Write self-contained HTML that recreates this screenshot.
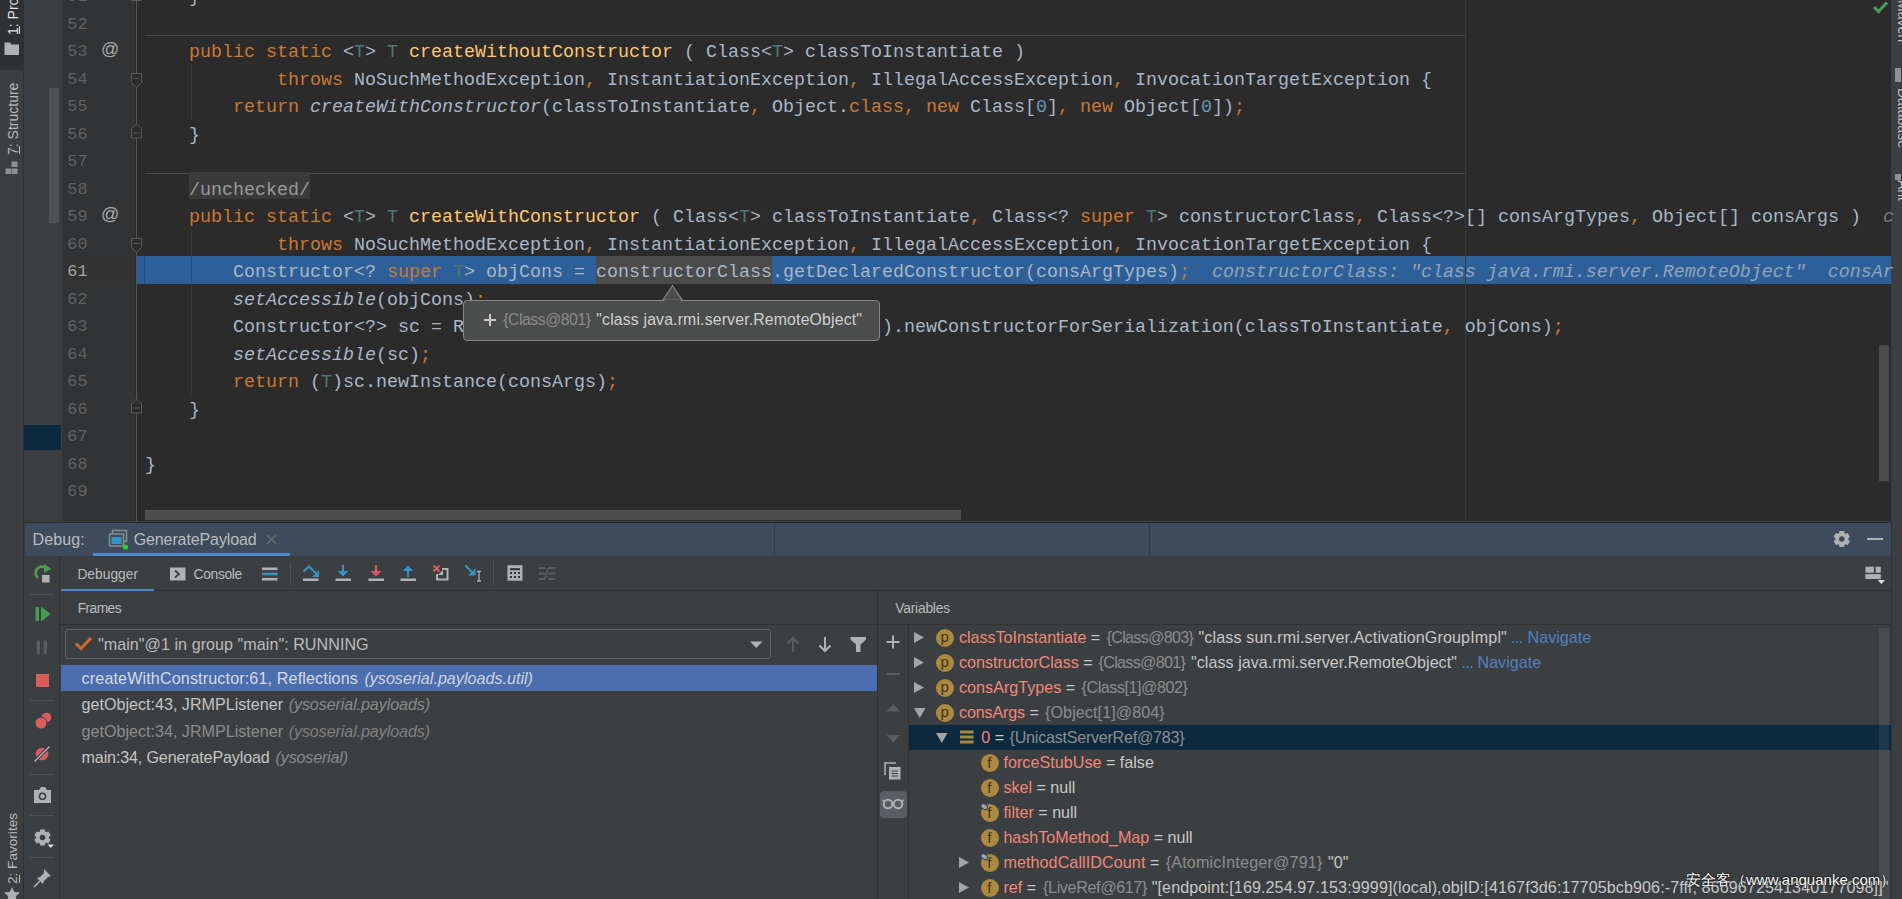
<!DOCTYPE html><html><head><meta charset="utf-8"><style>
*{margin:0;padding:0;box-sizing:border-box}
html,body{width:1902px;height:899px;overflow:hidden;background:#2b2b2b}
body{position:relative;font-family:"Liberation Sans",sans-serif}
.a{position:absolute}
.ln{position:absolute;left:57.5px;width:30px;text-align:right;font-family:"Liberation Mono",monospace;font-size:16.8px;color:#606366;height:27.5px;line-height:27.5px}
.code{position:absolute;left:145px;white-space:pre;font-family:"Liberation Mono",monospace;font-size:18.333px;line-height:27.5px;height:27.5px;color:#a9b7c6}
.k{color:#cc7832}
.m{color:#ffc66d}
.t{color:#507874}
.n{color:#6897bb}
.i{font-style:italic}
.dv{font-style:italic;color:#787878}
.ui{font-family:"Liberation Sans",sans-serif;white-space:pre;position:absolute}
</style></head><body>
<div class="a" style="left:0;top:0;width:23px;height:899px;background:#3c3f41"></div>
<div class="a" style="left:0;top:0;width:23px;height:70px;background:#2e3032"></div>
<div class="a" style="left:23px;top:0;width:1px;height:899px;background:#2f3133"></div>
<div class="a" style="left:24px;top:0;width:38px;height:521px;background:#3c3f41"></div>
<div class="a" style="left:49px;top:88px;width:10px;height:135px;background:#4f5254"></div>
<div class="a" style="left:24px;top:425px;width:37px;height:25px;background:#0d293e"></div>
<div class="a" style="left:62px;top:0;width:73px;height:521px;background:#313335"></div>
<div class="a" style="left:135px;top:0;width:1756px;height:521px;background:#2b2b2b"></div>
<div class="a" style="left:1891px;top:0;width:11px;height:899px;background:#3c3f41"></div>
<div class="a" style="left:137px;top:256.0px;width:1754px;height:27.5px;background:#2d6099"></div>
<div class="a" style="left:62px;top:256.0px;width:73px;height:27.5px;background:#323232"></div>
<div class="a" style="left:145px;top:35px;width:1320px;height:1px;background:#4b4b4b"></div>
<div class="a" style="left:145px;top:173px;width:1320px;height:1px;background:#4b4b4b"></div>
<div class="a" style="left:1465px;top:0;width:1px;height:521px;background:#3b3b3b"></div>
<div class="a" style="left:191px;top:63.5px;width:1px;height:55.0px;background:#393939"></div>
<div class="a" style="left:191px;top:228.5px;width:1px;height:165.0px;background:#393939"></div>
<div class="a" style="left:191px;top:256.0px;width:1px;height:27.5px;background:#1f4d80"></div>
<div class="a" style="left:144px;top:256.0px;width:1px;height:27.5px;background:#1f4d80"></div>
<div class="a" style="left:136px;top:0;width:1px;height:521px;background:#555"></div>
<div class="ln" style="top:-17.0px;color:#606366">51</div>
<div class="ln" style="top:10.5px;color:#606366">52</div>
<div class="ln" style="top:38.0px;color:#606366">53</div>
<div class="ln" style="top:65.5px;color:#606366">54</div>
<div class="ln" style="top:93.0px;color:#606366">55</div>
<div class="ln" style="top:120.5px;color:#606366">56</div>
<div class="ln" style="top:148.0px;color:#606366">57</div>
<div class="ln" style="top:175.5px;color:#606366">58</div>
<div class="ln" style="top:203.0px;color:#606366">59</div>
<div class="ln" style="top:230.5px;color:#606366">60</div>
<div class="ln" style="top:258.0px;color:#a4a3a3">61</div>
<div class="ln" style="top:285.5px;color:#606366">62</div>
<div class="ln" style="top:313.0px;color:#606366">63</div>
<div class="ln" style="top:340.5px;color:#606366">64</div>
<div class="ln" style="top:368.0px;color:#606366">65</div>
<div class="ln" style="top:395.5px;color:#606366">66</div>
<div class="ln" style="top:423.0px;color:#606366">67</div>
<div class="ln" style="top:450.5px;color:#606366">68</div>
<div class="ln" style="top:478.0px;color:#606366">69</div>
<div class="a" style="left:101px;top:36.0px;height:27.5px;line-height:27.5px;font-size:18px;color:#a9a9a9;font-family:Liberation Sans">@</div>
<div class="a" style="left:101px;top:201.0px;height:27.5px;line-height:27.5px;font-size:18px;color:#a9a9a9;font-family:Liberation Sans">@</div>
<svg class="a" style="left:0;top:0" width="200" height="521"><polygon points="131.5,0.5 141.5,0.5 141.5,-8.5 136.5,-13.5 131.5,-8.5" fill="#2b2b2b" stroke="#5c5c5c" stroke-width="1"/><line x1="133.5" y1="-4.5" x2="139.5" y2="-4.5" stroke="#5c5c5c"/><polygon points="131.5,73.5 141.5,73.5 141.5,82.5 136.5,87.5 131.5,82.5" fill="#2b2b2b" stroke="#5c5c5c" stroke-width="1"/><line x1="133.5" y1="78.5" x2="139.5" y2="78.5" stroke="#5c5c5c"/><polygon points="131.5,138.0 141.5,138.0 141.5,129.0 136.5,124.0 131.5,129.0" fill="#2b2b2b" stroke="#5c5c5c" stroke-width="1"/><line x1="133.5" y1="133.0" x2="139.5" y2="133.0" stroke="#5c5c5c"/><polygon points="131.5,238.5 141.5,238.5 141.5,247.5 136.5,252.5 131.5,247.5" fill="#2b2b2b" stroke="#5c5c5c" stroke-width="1"/><line x1="133.5" y1="243.5" x2="139.5" y2="243.5" stroke="#5c5c5c"/><polygon points="131.5,413.0 141.5,413.0 141.5,404.0 136.5,399.0 131.5,404.0" fill="#2b2b2b" stroke="#5c5c5c" stroke-width="1"/><line x1="133.5" y1="408.0" x2="139.5" y2="408.0" stroke="#5c5c5c"/></svg>
<div class="a" style="left:189px;top:172.0px;width:121px;height:26.5px;background:#3a3a3a"></div>
<div class="a" style="left:596.0px;top:256.0px;width:176.0px;height:27.5px;background:#4b4b4b"></div>
<div class="code" style="top:-16.0px">    }</div>
<div class="code" style="top:39.0px"><span class="k">    public static </span>&lt;<span class="t">T</span>&gt; <span class="t">T </span><span class="m">createWithoutConstructor</span> ( Class&lt;<span class="t">T</span>&gt; classToInstantiate )</div>
<div class="code" style="top:66.5px"><span class="k">            throws </span>NoSuchMethodException<span class="k">, </span>InstantiationException<span class="k">, </span>IllegalAccessException<span class="k">, </span>InvocationTargetException {</div>
<div class="code" style="top:94.0px"><span class="k">        return </span><span class="i">createWithConstructor</span>(classToInstantiate<span class="k">, </span>Object.<span class="k">class</span><span class="k">, </span><span class="k">new </span>Class[<span class="n">0</span>]<span class="k">, </span><span class="k">new </span>Object[<span class="n">0</span>])<span class="k">;</span></div>
<div class="code" style="top:121.5px">    }</div>
<div class="code" style="top:204.0px"><span class="k">    public static </span>&lt;<span class="t">T</span>&gt; <span class="t">T </span><span class="m">createWithConstructor</span> ( Class&lt;<span class="t">T</span>&gt; classToInstantiate<span class="k">, </span>Class&lt;? <span class="k">super </span><span class="t">T</span>&gt; constructorClass<span class="k">, </span>Class&lt;?&gt;[] consArgTypes<span class="k">, </span>Object[] consArgs )  <span class="dv">c</span></div>
<div class="code" style="top:231.5px"><span class="k">            throws </span>NoSuchMethodException<span class="k">, </span>InstantiationException<span class="k">, </span>IllegalAccessException<span class="k">, </span>InvocationTargetException {</div>
<div class="code" style="top:259.0px">        Constructor&lt;? <span class="k">super </span><span class="t">T</span>&gt; objCons = constructorClass.getDeclaredConstructor(consArgTypes)<span class="k">;</span><span style="font-style:italic;color:#92a5b9">  constructorClass: &quot;class java.rmi.server.RemoteObject&quot;  consAr</span></div>
<div class="code" style="top:286.5px"><span class="i">        setAccessible</span>(objCons)<span class="k">;</span></div>
<div class="code" style="top:314.0px">        Constructor&lt;?&gt; sc = ReflectionFactory.getReflectionFactory().newConstructorForSerialization(classToInstantiate<span class="k">, </span>objCons)<span class="k">;</span></div>
<div class="code" style="top:341.5px"><span class="i">        setAccessible</span>(sc)<span class="k">;</span></div>
<div class="code" style="top:369.0px"><span class="k">        return </span>(<span class="t">T</span>)sc.newInstance(consArgs)<span class="k">;</span></div>
<div class="code" style="top:396.5px">    }</div>
<div class="code" style="top:451.5px">}</div>
<div class="code" style="top:176.5px">    <span style="color:#999">/unchecked/</span></div>
<div class="a" style="left:145px;top:510px;width:816px;height:10px;background:#4e4e4e"></div>
<div class="a" style="left:1879px;top:345px;width:10px;height:136px;background:#4c4c4c"></div>
<svg class="a" style="left:1872px;top:0" width="18" height="16"><path d="M2,7 L6.5,11.5 L15,2.5" stroke="#499c54" stroke-width="3" fill="none"/></svg>
<div class="a" style="left:463px;top:299.5px;width:417px;height:41px;background:#4b4d4d;border:1px solid #858585;border-radius:4px"></div>
<svg class="a" style="left:660px;top:284px" width="26" height="17"><polygon points="3,16 12.5,1.5 22,16" fill="#4b4d4d" stroke="#858585" stroke-width="1.2"/><rect x="4.5" y="15.6" width="16" height="2.5" fill="#4b4d4d"/></svg>
<svg class="a" style="left:483px;top:313px" width="14" height="14"><path d="M7,1 V13 M1,7 H13" stroke="#c8c8c8" stroke-width="2"/></svg>
<div class="a" style="left:24px;top:521px;width:1867px;height:378px;background:#3c3f41"></div>
<div class="a" style="left:25px;top:522px;width:1866px;height:1px;background:#2b2b2b"></div>
<div class="a" style="left:25px;top:523px;width:1866px;height:33px;background:#3d4b5c"></div>
<div class="a" style="left:774px;top:523px;width:1px;height:33px;background:#323a44"></div>
<div class="a" style="left:1149px;top:523px;width:1px;height:33px;background:#323a44"></div>
<div class="a" style="left:93px;top:553px;width:197px;height:3px;background:#4a88c7"></div>
<div class="ui" style="left:32.5px;top:531.22px;font-size:16px;line-height:17.87px;color:#bbbbbb;font-family:'Liberation Sans';letter-spacing:0.143px;">Debug:</div>
<div class="ui" style="left:133.7px;top:531.22px;font-size:16px;line-height:17.87px;color:#bbbbbb;font-family:'Liberation Sans';letter-spacing:-0.108px;">GeneratePayload</div>
<svg class="a" style="left:265px;top:533px" width="13" height="13"><path d="M2,2 L11,11 M11,2 L2,11" stroke="#6e6e6e" stroke-width="1.3"/></svg>
<svg class="a" style="left:108px;top:529px" width="22" height="22"><rect x="4.5" y="1.5" width="14" height="11" fill="none" stroke="#8a8e91" stroke-width="1.5"/><rect x="1.5" y="5" width="14" height="12" fill="#3d4b5c" stroke="#8a8e91" stroke-width="1.5"/><rect x="3.5" y="8" width="10" height="7" fill="#3592c4"/><circle cx="17.5" cy="18" r="2.6" fill="#2bd12b"/></svg>
<svg class="a" style="left:1833px;top:530px" width="18" height="18"><path fill="#afb1b3" fill-rule="evenodd" d="M11.63,14.74 L10.97,17.11 L6.63,17.11 L5.97,14.74 L5.24,14.32 L2.86,14.94 L0.69,11.17 L2.41,9.42 L2.41,8.58 L0.69,6.83 L2.86,3.06 L5.24,3.68 L5.97,3.26 L6.63,0.89 L10.97,0.89 L11.63,3.26 L12.36,3.68 L14.74,3.06 L16.91,6.83 L15.19,8.58 L15.19,9.42 L16.91,11.17 L14.74,14.94 L12.36,14.32 Z M11.60,9.00 A2.8,2.8 0 1 0 6.00,9.00 A2.8,2.8 0 1 0 11.60,9.00 Z"/></svg>
<div class="a" style="left:1867px;top:538px;width:16px;height:2px;background:#afb1b3"></div>
<div class="a" style="left:59px;top:556px;width:1px;height:343px;background:#323232"></div>
<div class="a" style="left:60px;top:590px;width:1831px;height:1px;background:#323232"></div>
<div class="a" style="left:61px;top:589px;width:93px;height:2px;background:#4a88c7"></div>
<div class="ui" style="left:77.4px;top:566.51px;font-size:13.8px;line-height:15.41px;color:#bbbbbb;font-family:'Liberation Sans';letter-spacing:0.001px;">Debugger</div>
<div class="ui" style="left:193.5px;top:566.51px;font-size:13.8px;line-height:15.41px;color:#bbbbbb;font-family:'Liberation Sans';letter-spacing:-0.304px;">Console</div>
<svg class="a" style="left:170px;top:567px" width="16" height="14"><rect x="0" y="0.5" width="15.5" height="13" fill="#afb1b3"/><path d="M5,3.5 L9,7 L5,10.5" stroke="#3c3f41" stroke-width="1.8" fill="none"/></svg>
<svg class="a" style="left:262px;top:567px" width="16" height="14"><rect x="0" y="0.5" width="15.5" height="2.6" fill="#afb1b3"/><rect x="0" y="5.7" width="15.5" height="2.6" fill="#3592c4"/><rect x="0" y="10.9" width="15.5" height="2.6" fill="#afb1b3"/></svg>
<div class="a" style="left:290px;top:562px;width:1px;height:23px;background:#505254"></div>
<div class="a" style="left:493px;top:561px;width:1px;height:24px;background:#505254"></div>
<svg class="a" style="left:302px;top:564px" width="18" height="18"><path d="M1.5,7.5 L7,2.5 L12,7.5" stroke="#3592c4" stroke-width="2" fill="none"/><path d="M12,7.5 L15.5,11" stroke="#3592c4" stroke-width="2"/><polygon points="17,6 17,13 10,13" fill="#3592c4"/><rect x="1" y="14.5" width="15.5" height="2.5" fill="#afb1b3"/></svg>
<svg class="a" style="left:335px;top:564px" width="18" height="18"><rect x="7" y="1" width="2" height="8" fill="#3592c4"/><polygon points="2.5,7 13.5,7 8,12.5" fill="#3592c4"/><rect x="0.5" y="14.5" width="15.5" height="2.5" fill="#afb1b3"/></svg>
<svg class="a" style="left:368px;top:564px" width="18" height="18"><rect x="7" y="1" width="2" height="8" fill="#db5c5c"/><polygon points="2.5,7 13.5,7 8,12.5" fill="#db5c5c"/><rect x="0.5" y="14.5" width="15.5" height="2.5" fill="#afb1b3"/></svg>
<svg class="a" style="left:400px;top:564px" width="18" height="18"><rect x="7" y="5" width="2" height="8" fill="#3592c4"/><polygon points="2.5,7 13.5,7 8,1.5" fill="#3592c4"/><rect x="0.5" y="14.5" width="15.5" height="2.5" fill="#afb1b3"/></svg>
<svg class="a" style="left:432px;top:564px" width="18" height="18"><path d="M1.5,1.5 L7.5,7.5 M7.5,1.5 L1.5,7.5" stroke="#db5c5c" stroke-width="2"/><path d="M10,5 H15.5 V15.5 H5 V10" stroke="#afb1b3" stroke-width="2" fill="none"/><polygon points="6,11 11,11 11,6" fill="#afb1b3"/></svg>
<svg class="a" style="left:464px;top:564px" width="20" height="20"><path d="M1.5,1.5 L9,9" stroke="#3592c4" stroke-width="2.2"/><polygon points="11.5,4 11.5,11.5 4,11.5" fill="#3592c4"/><path d="M13,7.5 H17 M15,7.5 V17 M13,17 H17" stroke="#afb1b3" stroke-width="1.3"/></svg>
<svg class="a" style="left:507px;top:565px" width="16" height="16"><rect x="0.5" y="0.2" width="15" height="15.5" fill="#afb1b3"/><g fill="#2f3133"><rect x="3" y="3.2" width="10" height="2"/><rect x="3" y="7" width="2" height="2"/><rect x="7" y="7" width="2" height="2"/><rect x="11" y="7" width="2" height="2"/><rect x="3" y="11" width="2" height="2"/><rect x="7" y="11" width="2" height="2"/><rect x="11" y="11" width="2" height="2"/></g></svg>
<svg class="a" style="left:539px;top:566px" width="17" height="15"><g stroke="#5b5d5f" stroke-width="2" fill="none"><path d="M0,2 H6.5 M0,7.5 H6 M0,13 H6 M9,2 H16.5 M9,7.5 H16.5 M9,13 H16.5"/><path d="M6,13 L9,2" stroke-width="1.3"/></g></svg>
<svg class="a" style="left:1865px;top:566px" width="22" height="20"><rect x="0.4" y="0.7" width="8.5" height="6" fill="#afb1b3"/><rect x="10.6" y="0.7" width="5.2" height="6" fill="#afb1b3"/><rect x="0.4" y="8.1" width="15.4" height="4.9" fill="#afb1b3"/><polygon points="12.7,14 20,14 16.35,18" fill="#dddddd"/></svg>
<svg class="a" style="left:33px;top:564px" width="20" height="20"><path d="M5,14 A6,6 0 1 1 13,4" stroke="#499c54" stroke-width="2.6" fill="none"/><polygon points="11,0 18,4.5 11,9" fill="#499c54"/><rect x="9" y="11" width="7.5" height="7.5" fill="#afb1b3"/></svg>
<div class="a" style="left:30px;top:594px;width:24px;height:1px;background:#505254"></div>
<div class="a" style="left:30px;top:700px;width:24px;height:1px;background:#505254"></div>
<div class="a" style="left:30px;top:774px;width:24px;height:1px;background:#505254"></div>
<div class="a" style="left:30px;top:815px;width:24px;height:1px;background:#505254"></div>
<div class="a" style="left:30px;top:857px;width:24px;height:1px;background:#505254"></div>
<svg class="a" style="left:35px;top:606px" width="17" height="16"><rect x="0.5" y="1" width="3.5" height="14" fill="#499c54"/><polygon points="6,0.5 15.5,8 6,15.5" fill="#499c54"/></svg>
<svg class="a" style="left:36px;top:640px" width="12" height="15"><rect x="0.5" y="0.5" width="3.5" height="13.5" fill="#5b5d5f"/><rect x="7.5" y="0.5" width="3.5" height="13.5" fill="#5b5d5f"/></svg>
<div class="a" style="left:36px;top:673.5px;width:12.5px;height:13px;background:#db5c5c"></div>
<svg class="a" style="left:34px;top:712px" width="18" height="18"><circle cx="12.5" cy="5.5" r="4.8" fill="#db5c5c"/><circle cx="7" cy="11" r="6.2" fill="#3c3f41"/><circle cx="7" cy="11" r="5.5" fill="#db5c5c"/></svg>
<svg class="a" style="left:33px;top:745px" width="18" height="18"><circle cx="9" cy="9" r="6.3" fill="#db5c5c"/><path d="M2,16 L16,2" stroke="#3c3f41" stroke-width="3.5"/><path d="M1.5,16.5 L16.5,1.5" stroke="#afb1b3" stroke-width="1.4"/></svg>
<svg class="a" style="left:33px;top:786px" width="19" height="18"><path d="M1,4 H6 L8,1 H12 L14,4 H18 V17 H1 Z" fill="#afb1b3"/><circle cx="9.5" cy="10.3" r="3.8" fill="#3c3f41"/><circle cx="9.5" cy="10.3" r="2.2" fill="#afb1b3"/></svg>
<svg class="a" style="left:33px;top:828px" width="22" height="22"><path fill="#afb1b3" fill-rule="evenodd" d="M12.33,15.24 L11.67,17.61 L7.33,17.61 L6.67,15.24 L5.94,14.82 L3.56,15.44 L1.39,11.67 L3.11,9.92 L3.11,9.08 L1.39,7.33 L3.56,3.56 L5.94,4.18 L6.67,3.76 L7.33,1.39 L11.67,1.39 L12.33,3.76 L13.06,4.18 L15.44,3.56 L17.61,7.33 L15.89,9.08 L15.89,9.92 L17.61,11.67 L15.44,15.44 L13.06,14.82 Z M12.30,9.50 A2.8,2.8 0 1 0 6.70,9.50 A2.8,2.8 0 1 0 12.30,9.50 Z"/><polygon points="14.5,16.5 21,16.5 17.75,20" fill="#dddddd"/></svg>
<svg class="a" style="left:33px;top:868px" width="20" height="20"><polygon points="11,1 18,8 15,9 11,13 10,16 4,10 7,9 11,5" fill="#afb1b3"/><path d="M1,19 L7,13" stroke="#afb1b3" stroke-width="1.6"/></svg>
<div class="ui" style="left:77.7px;top:600.51px;font-size:13.8px;line-height:15.41px;color:#bbbbbb;font-family:'Liberation Sans';letter-spacing:-0.578px;">Frames</div>
<div class="ui" style="left:895.3px;top:600.51px;font-size:13.8px;line-height:15.41px;color:#bbbbbb;font-family:'Liberation Sans';letter-spacing:-0.220px;">Variables</div>
<div class="a" style="left:60px;top:624px;width:1831px;height:1px;background:#323232"></div>
<div class="a" style="left:877px;top:591px;width:1px;height:308px;background:#323232"></div>
<div class="a" style="left:908px;top:625px;width:1px;height:274px;background:#323232"></div>
<div class="a" style="left:65px;top:629px;width:706px;height:30px;border:1px solid #646464;border-radius:3px;background:#3c3f41"></div>
<svg class="a" style="left:74px;top:636px" width="19" height="15"><path d="M2,7.5 L7,12.5 L17,2" stroke="#cf6a2e" stroke-width="3" fill="none"/></svg>
<div class="ui" style="left:98px;top:635.23px;font-size:16.1px;line-height:17.98px;color:#bbbbbb;font-family:'Liberation Sans';letter-spacing:0.048px;">&quot;main&quot;@1 in group &quot;main&quot;: RUNNING</div>
<svg class="a" style="left:749px;top:640px" width="15" height="10"><polygon points="1,1.5 13.5,1.5 7.25,8" fill="#afb1b3"/></svg>
<svg class="a" style="left:786px;top:636px" width="14" height="17"><path d="M7,2 V16" stroke="#5b5d5f" stroke-width="2"/><path d="M1.5,7.5 L7,2 L12.5,7.5" stroke="#5b5d5f" stroke-width="2" fill="none"/></svg>
<svg class="a" style="left:818px;top:636px" width="14" height="17"><path d="M7,1 V15" stroke="#afb1b3" stroke-width="2"/><path d="M1.5,9.5 L7,15 L12.5,9.5" stroke="#afb1b3" stroke-width="2" fill="none"/></svg>
<svg class="a" style="left:850px;top:636px" width="17" height="17"><polygon points="0.5,1 16,1 16,3.5 10.5,8.5 10.5,16 6,16 6,8.5 0.5,3.5" fill="#afb1b3"/></svg>
<div class="a" style="left:61px;top:665px;width:816px;height:26px;background:#4b6eaf"></div>
<div class="ui" style="left:81.6px;top:669.03px;font-size:16.1px;line-height:17.98px;color:#d8dadf;font-family:'Liberation Sans';letter-spacing:0.145px;">createWithConstructor:61, Reflections</div>
<div class="ui" style="left:364.4px;top:669.03px;font-size:16.1px;line-height:17.98px;color:#d0d4dc;font-family:'Liberation Sans';font-style:italic;letter-spacing:0.016px;">(ysoserial.payloads.util)</div>
<div class="ui" style="left:81.6px;top:695.33px;font-size:16.1px;line-height:17.98px;color:#c4c4c4;font-family:'Liberation Sans';letter-spacing:0.005px;">getObject:43, JRMPListener</div>
<div class="ui" style="left:288.7px;top:695.33px;font-size:16.1px;line-height:17.98px;color:#8a8a8a;font-family:'Liberation Sans';font-style:italic;letter-spacing:-0.092px;">(ysoserial.payloads)</div>
<div class="ui" style="left:81.6px;top:721.63px;font-size:16.1px;line-height:17.98px;color:#8c8c8c;font-family:'Liberation Sans';letter-spacing:0.005px;">getObject:34, JRMPListener</div>
<div class="ui" style="left:288.7px;top:721.63px;font-size:16.1px;line-height:17.98px;color:#808080;font-family:'Liberation Sans';font-style:italic;letter-spacing:-0.092px;">(ysoserial.payloads)</div>
<div class="ui" style="left:81.6px;top:747.93px;font-size:16.1px;line-height:17.98px;color:#c4c4c4;font-family:'Liberation Sans';letter-spacing:-0.145px;">main:34, GeneratePayload</div>
<div class="ui" style="left:275.6px;top:747.93px;font-size:16.1px;line-height:17.98px;color:#8a8a8a;font-family:'Liberation Sans';font-style:italic;letter-spacing:-0.176px;">(ysoserial)</div>
<svg class="a" style="left:886px;top:635px" width="15" height="15"><path d="M7,0.5 V13.5 M0.5,7 H13.5" stroke="#afb1b3" stroke-width="2"/></svg>
<div class="a" style="left:887px;top:673px;width:12.5px;height:2px;background:#5b5d5f"></div>
<svg class="a" style="left:886px;top:702px" width="15" height="10"><polygon points="0.5,9.5 14,9.5 7.25,2" fill="#5b5d5f"/></svg>
<svg class="a" style="left:886px;top:734px" width="15" height="10"><polygon points="0.5,1 14,1 7.25,8.5" fill="#5b5d5f"/></svg>
<svg class="a" style="left:884px;top:762px" width="18" height="19"><path d="M1,13 V1 H12" stroke="#afb1b3" stroke-width="1.6" fill="none"/><rect x="5" y="5" width="11.5" height="12.5" fill="#afb1b3"/><path d="M7.5,9 H14 M7.5,11.5 H14 M7.5,14 H14" stroke="#3c3f41" stroke-width="1.2"/></svg>
<div class="a" style="left:879.5px;top:790.5px;width:27px;height:27px;background:#5a5d61;border-radius:4px"></div>
<svg class="a" style="left:882px;top:797px" width="22" height="14"><circle cx="6" cy="7" r="4.3" stroke="#afb1b3" stroke-width="2" fill="none"/><circle cx="16" cy="7" r="4.3" stroke="#afb1b3" stroke-width="2" fill="none"/><path d="M10,6 H12 M0.5,4 L2,3 M21.5,4 L20,3" stroke="#afb1b3" stroke-width="1.6"/></svg>
<div class="a" style="left:909px;top:725px;width:982px;height:25px;background:#0d293e"></div>
<div class="a" style="left:1879px;top:628px;width:10px;height:271px;background:rgba(255,255,255,0.07)"></div>
<svg class="a" style="left:912.8px;top:631.0px" width="12" height="14"><polygon points="1,1 11,6.5 1,12" fill="#a5a5a5"/></svg>
<svg class="a" style="left:936px;top:627.5px" width="20" height="20"><circle cx="9" cy="10" r="9" fill="#ad8940"/></svg>
<div class="ui" style="left:940.4px;top:629.42px;font-size:15px;line-height:16.75px;color:#3b3222;font-family:'Liberation Sans';">p</div>
<div class="ui" style="left:959px;top:628.13px;font-size:16.1px;line-height:17.98px;color:#f2877a;font-family:'Liberation Sans';letter-spacing:-0.030px;">classToInstantiate</div>
<div class="ui" style="left:1086.4px;top:628.13px;font-size:16.1px;line-height:17.98px;color:#c8c8c8;font-family:'Liberation Sans';"> = </div>
<div class="ui" style="left:1106.5px;top:628.13px;font-size:16.1px;line-height:17.98px;color:#8d8d8d;font-family:'Liberation Sans';letter-spacing:-0.673px;">{Class@803}</div>
<div class="ui" style="left:1198.5px;top:628.13px;font-size:16.1px;line-height:17.98px;color:#c8c8c8;font-family:'Liberation Sans';letter-spacing:0.130px;">&quot;class sun.rmi.server.ActivationGroupImpl&quot;</div>
<div class="ui" style="left:1511px;top:628.13px;font-size:16.1px;line-height:17.98px;color:#5380c0;font-family:'Liberation Sans';letter-spacing:-0.635px;">...</div>
<div class="ui" style="left:1527.6px;top:628.13px;font-size:16.1px;line-height:17.98px;color:#5380c0;font-family:'Liberation Sans';letter-spacing:0.009px;">Navigate</div>
<svg class="a" style="left:912.8px;top:656.0px" width="12" height="14"><polygon points="1,1 11,6.5 1,12" fill="#a5a5a5"/></svg>
<svg class="a" style="left:936px;top:652.5px" width="20" height="20"><circle cx="9" cy="10" r="9" fill="#ad8940"/></svg>
<div class="ui" style="left:940.4px;top:654.42px;font-size:15px;line-height:16.75px;color:#3b3222;font-family:'Liberation Sans';">p</div>
<div class="ui" style="left:959px;top:653.13px;font-size:16.1px;line-height:17.98px;color:#f2877a;font-family:'Liberation Sans';letter-spacing:-0.004px;">constructorClass</div>
<div class="ui" style="left:1078.8px;top:653.13px;font-size:16.1px;line-height:17.98px;color:#c8c8c8;font-family:'Liberation Sans';"> = </div>
<div class="ui" style="left:1098.6px;top:653.13px;font-size:16.1px;line-height:17.98px;color:#8d8d8d;font-family:'Liberation Sans';letter-spacing:-0.691px;">{Class@801}</div>
<div class="ui" style="left:1191px;top:653.13px;font-size:16.1px;line-height:17.98px;color:#c8c8c8;font-family:'Liberation Sans';letter-spacing:0.040px;">&quot;class java.rmi.server.RemoteObject&quot;</div>
<div class="ui" style="left:1461.5px;top:653.13px;font-size:16.1px;line-height:17.98px;color:#5380c0;font-family:'Liberation Sans';letter-spacing:-0.635px;">...</div>
<div class="ui" style="left:1477.5px;top:653.13px;font-size:16.1px;line-height:17.98px;color:#5380c0;font-family:'Liberation Sans';letter-spacing:0.009px;">Navigate</div>
<svg class="a" style="left:912.8px;top:681.0px" width="12" height="14"><polygon points="1,1 11,6.5 1,12" fill="#a5a5a5"/></svg>
<svg class="a" style="left:936px;top:677.5px" width="20" height="20"><circle cx="9" cy="10" r="9" fill="#ad8940"/></svg>
<div class="ui" style="left:940.4px;top:679.42px;font-size:15px;line-height:16.75px;color:#3b3222;font-family:'Liberation Sans';">p</div>
<div class="ui" style="left:959px;top:678.13px;font-size:16.1px;line-height:17.98px;color:#f2877a;font-family:'Liberation Sans';letter-spacing:0.035px;">consArgTypes</div>
<div class="ui" style="left:1061.4px;top:678.13px;font-size:16.1px;line-height:17.98px;color:#c8c8c8;font-family:'Liberation Sans';"> = </div>
<div class="ui" style="left:1081.6px;top:678.13px;font-size:16.1px;line-height:17.98px;color:#8d8d8d;font-family:'Liberation Sans';letter-spacing:-0.450px;">{Class[1]@802}</div>
<svg class="a" style="left:912.8px;top:707.0px" width="14" height="12"><polygon points="1,1 12.5,1 6.75,11" fill="#a5a5a5"/></svg>
<svg class="a" style="left:936px;top:702.5px" width="20" height="20"><circle cx="9" cy="10" r="9" fill="#ad8940"/></svg>
<div class="ui" style="left:940.4px;top:704.42px;font-size:15px;line-height:16.75px;color:#3b3222;font-family:'Liberation Sans';">p</div>
<div class="ui" style="left:959px;top:703.13px;font-size:16.1px;line-height:17.98px;color:#f2877a;font-family:'Liberation Sans';letter-spacing:-0.137px;">consArgs</div>
<div class="ui" style="left:1025px;top:703.13px;font-size:16.1px;line-height:17.98px;color:#c8c8c8;font-family:'Liberation Sans';"> = </div>
<div class="ui" style="left:1045px;top:703.13px;font-size:16.1px;line-height:17.98px;color:#8d8d8d;font-family:'Liberation Sans';letter-spacing:0.096px;">{Object[1]@804}</div>
<svg class="a" style="left:935px;top:732.0px" width="14" height="12"><polygon points="1,1 12.5,1 6.75,11" fill="#a5a5a5"/></svg>
<div class="ui" style="left:981.3px;top:728.13px;font-size:16.1px;line-height:17.98px;color:#f2877a;font-family:'Liberation Sans';">0</div>
<div class="ui" style="left:990.253125px;top:728.13px;font-size:16.1px;line-height:17.98px;color:#c8c8c8;font-family:'Liberation Sans';"> = </div>
<div class="ui" style="left:1009.6px;top:728.13px;font-size:16.1px;line-height:17.98px;color:#8d8d8d;font-family:'Liberation Sans';letter-spacing:-0.244px;">{UnicastServerRef@783}</div>
<svg class="a" style="left:981px;top:752.5px" width="20" height="20"><circle cx="9" cy="10" r="9" fill="#ad8940"/></svg>
<div class="ui" style="left:987.3px;top:755.42px;font-size:15px;line-height:16.75px;color:#3b3222;font-family:'Liberation Sans';">f</div>
<div class="ui" style="left:1003.4px;top:753.13px;font-size:16.1px;line-height:17.98px;color:#f2877a;font-family:'Liberation Sans';letter-spacing:0.049px;">forceStubUse</div>
<div class="ui" style="left:1101.5px;top:753.13px;font-size:16.1px;line-height:17.98px;color:#c8c8c8;font-family:'Liberation Sans';"> = </div>
<div class="ui" style="left:1119.84375px;top:753.13px;font-size:16.1px;line-height:17.98px;color:#c8c8c8;font-family:'Liberation Sans';">false</div>
<svg class="a" style="left:981px;top:777.5px" width="20" height="20"><circle cx="9" cy="10" r="9" fill="#ad8940"/></svg>
<div class="ui" style="left:987.3px;top:780.42px;font-size:15px;line-height:16.75px;color:#3b3222;font-family:'Liberation Sans';">f</div>
<div class="ui" style="left:1003.4px;top:778.13px;font-size:16.1px;line-height:17.98px;color:#f2877a;font-family:'Liberation Sans';">skel</div>
<div class="ui" style="left:1032.025px;top:778.13px;font-size:16.1px;line-height:17.98px;color:#c8c8c8;font-family:'Liberation Sans';"> = </div>
<div class="ui" style="left:1050.36875px;top:778.13px;font-size:16.1px;line-height:17.98px;color:#c8c8c8;font-family:'Liberation Sans';">null</div>
<svg class="a" style="left:981px;top:802.5px" width="20" height="20"><circle cx="9" cy="10" r="9" fill="#ad8940"/><ellipse cx="3.2" cy="3.6" rx="3.6" ry="2.4" transform="rotate(35 3.2 3.6)" fill="#95a3ae" stroke="#3c3f41" stroke-width="1"/></svg>
<div class="ui" style="left:987.3px;top:805.42px;font-size:15px;line-height:16.75px;color:#3b3222;font-family:'Liberation Sans';">f</div>
<div class="ui" style="left:1003.4px;top:803.13px;font-size:16.1px;line-height:17.98px;color:#f2877a;font-family:'Liberation Sans';">filter</div>
<div class="ui" style="left:1033.80625px;top:803.13px;font-size:16.1px;line-height:17.98px;color:#c8c8c8;font-family:'Liberation Sans';"> = </div>
<div class="ui" style="left:1052.15px;top:803.13px;font-size:16.1px;line-height:17.98px;color:#c8c8c8;font-family:'Liberation Sans';">null</div>
<svg class="a" style="left:981px;top:827.5px" width="20" height="20"><circle cx="9" cy="10" r="9" fill="#ad8940"/></svg>
<div class="ui" style="left:987.3px;top:830.42px;font-size:15px;line-height:16.75px;color:#3b3222;font-family:'Liberation Sans';">f</div>
<div class="ui" style="left:1003.4px;top:828.13px;font-size:16.1px;line-height:17.98px;color:#f2877a;font-family:'Liberation Sans';">hashToMethod_Map</div>
<div class="ui" style="left:1149.259375px;top:828.13px;font-size:16.1px;line-height:17.98px;color:#c8c8c8;font-family:'Liberation Sans';"> = </div>
<div class="ui" style="left:1167.603125px;top:828.13px;font-size:16.1px;line-height:17.98px;color:#c8c8c8;font-family:'Liberation Sans';">null</div>
<svg class="a" style="left:957.7px;top:856.0px" width="12" height="14"><polygon points="1,1 11,6.5 1,12" fill="#a5a5a5"/></svg>
<svg class="a" style="left:981px;top:852.5px" width="20" height="20"><circle cx="9" cy="10" r="9" fill="#ad8940"/><ellipse cx="3.2" cy="3.6" rx="3.6" ry="2.4" transform="rotate(35 3.2 3.6)" fill="#95a3ae" stroke="#3c3f41" stroke-width="1"/></svg>
<div class="ui" style="left:987.3px;top:855.42px;font-size:15px;line-height:16.75px;color:#3b3222;font-family:'Liberation Sans';">f</div>
<div class="ui" style="left:1003.4px;top:853.13px;font-size:16.1px;line-height:17.98px;color:#f2877a;font-family:'Liberation Sans';letter-spacing:0.096px;">methodCallIDCount</div>
<div class="ui" style="left:1145.5px;top:853.13px;font-size:16.1px;line-height:17.98px;color:#c8c8c8;font-family:'Liberation Sans';"> = </div>
<div class="ui" style="left:1165.7px;top:853.13px;font-size:16.1px;line-height:17.98px;color:#8d8d8d;font-family:'Liberation Sans';letter-spacing:0.187px;">{AtomicInteger@791}</div>
<div class="ui" style="left:1328px;top:853.13px;font-size:16.1px;line-height:17.98px;color:#c8c8c8;font-family:'Liberation Sans';">&quot;0&quot;</div>
<svg class="a" style="left:957.7px;top:881.0px" width="12" height="14"><polygon points="1,1 11,6.5 1,12" fill="#a5a5a5"/></svg>
<svg class="a" style="left:981px;top:877.5px" width="20" height="20"><circle cx="9" cy="10" r="9" fill="#ad8940"/></svg>
<div class="ui" style="left:987.3px;top:880.42px;font-size:15px;line-height:16.75px;color:#3b3222;font-family:'Liberation Sans';">f</div>
<div class="ui" style="left:1003.4px;top:878.13px;font-size:16.1px;line-height:17.98px;color:#f2877a;font-family:'Liberation Sans';">ref</div>
<div class="ui" style="left:1022.18125px;top:878.13px;font-size:16.1px;line-height:17.98px;color:#c8c8c8;font-family:'Liberation Sans';"> = </div>
<div class="ui" style="left:1043px;top:878.13px;font-size:16.1px;line-height:17.98px;color:#8d8d8d;font-family:'Liberation Sans';letter-spacing:-0.349px;">{LiveRef@617}</div>
<div class="ui" style="left:1151.7px;top:878.13px;font-size:16.1px;line-height:17.98px;color:#c8c8c8;font-family:'Liberation Sans';letter-spacing:0.105px;">&quot;[endpoint:[169.254.97.153:9999](local),objID:[4167f3d6:17705bcb906:-7fff, 8669672541340177098]]&quot;</div>
<svg class="a" style="left:960px;top:730px" width="14" height="15"><rect x="0" y="0.5" width="13.5" height="3" fill="#a88a3e"/><rect x="0" y="5.5" width="13.5" height="3" fill="#a88a3e"/><rect x="0" y="10.5" width="13.5" height="3" fill="#a88a3e"/></svg>
<div class="a" style="left:1891px;top:521px;width:1px;height:378px;background:#2f3133"></div>
<div class="ui" style="left:1686px;top:870px;font-size:15px;line-height:20px;color:#ffffff;text-shadow:0 0 2px #000,0 0 1px #000">安全客（www.anquanke.com）</div>
<div class="ui" style="left:5px;top:35px;font-size:14px;line-height:16.10px;color:#e0e0e0;transform-origin:0 0;transform:rotate(-90deg)">1: Project</div>
<div class="a" style="left:19px;top:26px;width:1px;height:8px;background:#e0e0e0"></div>
<div class="ui" style="left:5px;top:155px;font-size:14px;line-height:16.10px;color:#bbbbbb;transform-origin:0 0;transform:rotate(-90deg)">7: Structure</div>
<div class="a" style="left:19px;top:146px;width:1px;height:8px;background:#bbbbbb"></div>
<div class="ui" style="left:5px;top:883.5px;font-size:13.6px;line-height:15.64px;color:#bbbbbb;transform-origin:0 0;transform:rotate(-90deg)">2: Favorites</div>
<div class="a" style="left:19px;top:875px;width:1px;height:8px;background:#bbbbbb"></div>
<svg class="a" style="left:4px;top:42px" width="16" height="14"><path d="M0.5,0.5 H6 L7.5,2.5 H15 V13 H0.5 Z" fill="#afb1b3"/></svg>
<svg class="a" style="left:5px;top:161px" width="14" height="14"><rect x="6.5" y="0.5" width="6" height="5.5" fill="#8e9092"/><rect x="0.5" y="7.5" width="5.5" height="5.5" fill="#8e9092"/><rect x="6.5" y="7.5" width="6" height="5.5" fill="#8e9092"/></svg>
<svg class="a" style="left:3px;top:886px" width="18" height="14"><polygon points="9,1 11.3,6 17,6.6 12.7,10.3 14,16 9,13 4,16 5.3,10.3 1,6.6 6.7,6" fill="#afb1b3"/></svg>
<div class="ui" style="left:1911px;top:0px;font-size:14px;line-height:16.10px;color:#bbbbbb;transform-origin:0 0;transform:rotate(90deg)">Maven</div>
<div class="ui" style="left:1911px;top:88px;font-size:14px;line-height:16.10px;color:#bbbbbb;transform-origin:0 0;transform:rotate(90deg)">Database</div>
<div class="ui" style="left:1911px;top:180px;font-size:14px;line-height:16.10px;color:#bbbbbb;transform-origin:0 0;transform:rotate(90deg)">Ant</div>
<div class="a" style="left:1895px;top:68px;width:6px;height:14px;background:#8e9092"></div>
<div class="a" style="left:1895px;top:174px;width:6px;height:6px;background:#8e9092"></div>
<div class="ui" style="left:503.3px;top:310.50px;font-size:15.8px;line-height:17.65px;color:#8a8a8a;font-family:'Liberation Sans';letter-spacing:-0.478px;">{Class@801}</div>
<div class="ui" style="left:596.3px;top:310.50px;font-size:15.8px;line-height:17.65px;color:#d0d0d0;font-family:'Liberation Sans';letter-spacing:0.169px;">&quot;class java.rmi.server.RemoteObject&quot;</div>
</body></html>
